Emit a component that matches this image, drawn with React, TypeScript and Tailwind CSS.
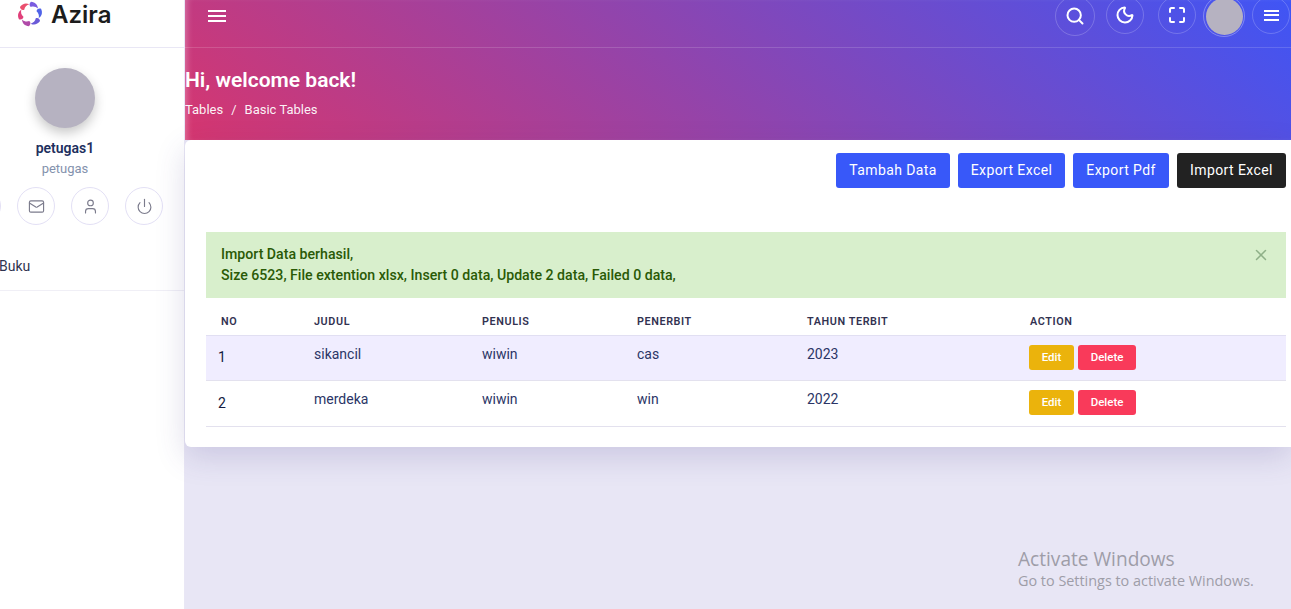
import { Search, Moon, Mail, User, Power, X } from "lucide-react";

const ROWS = [
  { no: 1, judul: "sikancil", penulis: "wiwin", penerbit: "cas", tahun: "2023", rowH: "h-[45px]", pad: "pb-0" },
  { no: 2, judul: "merdeka", penulis: "wiwin", penerbit: "win", tahun: "2022", rowH: "h-[46px]", pad: "pb-[1px]" },
];

const PETALS = [
  { r: 0, c: "#7a5ce0" },
  { r: 60, c: "#4f63e8" },
  { r: 120, c: "#6a5ad8" },
  { r: 180, c: "#b04aa8" },
  { r: 240, c: "#e0407a" },
  { r: 300, c: "#ea4f6e" },
];

function Logo() {
  return (
    <svg viewBox="0 0 26 26" className="w-[26px] h-[26px] shrink-0">
      {PETALS.map((p) => (
        <path
          key={p.r}
          d="M14 .8C18.200 1.200 20.800 3.800 21 7.600 19 5.600 16.400 5 13.800 5.900 12 4.600 12.200 2.400 14 .8z"
          fill={p.c}
          transform={`rotate(${p.r} 13 13)`}
        />
      ))}
    </svg>
  );
}

function TopIcon({ children, className = "w-[38px] h-[38px]" }: { children: React.ReactNode; className?: string }) {
  return (
    <div className={`${className} rounded-full border border-white/20 flex items-center justify-center shrink-0`}>
      {children}
    </div>
  );
}

function SideIcon({ children }: { children?: React.ReactNode }) {
  return (
    <div className="w-[38px] h-[38px] rounded-full border border-[#e3e0f5] flex items-center justify-center shrink-0 text-[#7b7b8c]">
      {children}
    </div>
  );
}

function Hamburger({ className }: { className: string }) {
  return (
    <div className={`flex flex-col justify-between ${className}`}>
      <span className="block h-[2px] bg-white" />
      <span className="block h-[2px] bg-white" />
      <span className="block h-[2px] bg-white" />
    </div>
  );
}

export default function App() {
  return (
    <div className="relative flex w-[1291px] h-[609px] overflow-hidden bg-[#e8e6f5] font-['Roboto',sans-serif] text-[#1d2a55]">
      {/* Sidebar */}
      <aside className="w-[185px] shrink-0 bg-white border-r border-[#e9e7f5] overflow-hidden flex flex-col">
        <div className="h-[48px] shrink-0 border-b border-[#e9e7f5] flex items-start pl-[17px] pt-[1px] gap-[8px]">
          <Logo />
          <span className="font-['Inter',sans-serif] font-semibold text-[24px] leading-[27px] text-[#1c1c1c]">Azira</span>
        </div>
        <div className="flex flex-col items-center pt-[20px] pr-[54px]">
          <div className="w-[60px] h-[60px] rounded-full bg-[#b6b2c1] shadow-[0_5px_12px_rgba(0,0,0,0.22)]" />
          <div className="mt-[10px] text-[14px] leading-[20px] font-semibold text-[#1d2f5e]">petugas1</div>
          <div className="mt-[1px] text-[13px] leading-[20px] text-[#8492ad]">petugas</div>
        </div>
        <div className="mt-[8px] ml-[-37px] flex gap-[16px]">
          <SideIcon />
          <SideIcon><Mail size={17} strokeWidth={1.6} /></SideIcon>
          <SideIcon><User size={17} strokeWidth={1.6} /></SideIcon>
          <SideIcon><Power size={17} strokeWidth={1.6} /></SideIcon>
        </div>
        <div className="mt-[20px] h-[46px] ml-[-1px] border-b border-[#f0eff6] text-[14px] leading-[42px] text-[#2f3350]">Buku</div>
      </aside>

      {/* Main */}
      <main className="flex-1 min-w-0 flex flex-col">
        <div className="h-[140px] shrink-0 bg-[linear-gradient(40deg,#d6366f,#3f55f5)] shadow-[inset_6px_0_6px_-4px_rgba(255,255,255,0.3)]">
          <div className="h-[48px] border-b border-white/15 flex items-start">
            <Hamburger className="ml-[23px] mt-[10px] w-[18px] h-[12px]" />
            <div className="ml-auto flex items-start mt-[-4px]">
              <TopIcon className="w-[40px] h-[40px]"><Search size={20} strokeWidth={2.4} className="text-white" /></TopIcon>
              <div className="ml-[11px]">
                <TopIcon><Moon size={20} strokeWidth={2.4} className="text-white" /></TopIcon>
              </div>
              <div className="ml-[14px]">
                <TopIcon>
                  <svg viewBox="0 0 16 16" className="w-[16px] h-[16px]" fill="none" stroke="white" strokeWidth="2" strokeLinecap="round">
                    <path d="M1 5V2.500A1.500 1.500 0 0 1 2.500 1H5M11 1h2.500A1.500 1.500 0 0 1 15 2.500V5M15 11v2.500a1.500 1.500 0 0 1-1.500 1.500H11M5 15H2.500A1.500 1.500 0 0 1 1 13.500V11" />
                  </svg>
                </TopIcon>
              </div>
              <div className="ml-[7px] mt-[-1px] w-[42px] h-[42px] rounded-full border border-white/30 flex items-center justify-center shrink-0">
                <div className="w-[37px] h-[37px] rounded-full bg-[#b6b2c1]" />
              </div>
              <div className="ml-[7px] mr-[1px]">
                <TopIcon><Hamburger className="w-[15px] h-[11px]" /></TopIcon>
              </div>
            </div>
          </div>
          <h1 className="mt-[19px] text-[21px] leading-[26px] font-semibold text-white">Hi, welcome back!</h1>
          <div className="mt-[8px] text-[13px] leading-[18px] text-white/95 flex gap-[8px]">
            <span>Tables</span>
            <span>/</span>
            <span>Basic Tables</span>
          </div>
        </div>

        {/* Card */}
        <section className="h-[307px] bg-white rounded-tl-[6px] rounded-bl-[6px] shadow-[0_10px_30px_rgba(70,60,140,0.18)] pl-[21px] pr-[5px] pt-[13px]">
          <div className="flex justify-end gap-[8px]">
            <button className="h-[35px] w-[114px] rounded-[3px] bg-[#3858f9] text-white text-[14px] tracking-[0.4px]">Tambah Data</button>
            <button className="h-[35px] w-[107px] rounded-[3px] bg-[#3858f9] text-white text-[14px] tracking-[0.4px]">Export Excel</button>
            <button className="h-[35px] w-[96px] rounded-[3px] bg-[#3858f9] text-white text-[14px] tracking-[0.4px]">Export Pdf</button>
            <button className="h-[35px] w-[109px] rounded-[3px] bg-[#222222] text-white text-[14px] tracking-[0.4px]">Import Excel</button>
          </div>

          <div className="mt-[44px] h-[66px] bg-[#d8efcc] pl-[15px] pr-[16px] py-[12px] flex justify-between text-[14.15px] leading-[21px] font-medium text-[#2a5a06]">
            <div>
              <div>Import Data berhasil,</div>
              <div>Size 6523, File extention xlsx, Insert 0 data, Update 2 data, Failed 0 data,</div>
            </div>
            <X size={18} strokeWidth={2} className="text-[#8fb088] mt-[2px]" />
          </div>

          <table className="w-full table-fixed border-collapse">
            <colgroup>
              <col className="w-[108px]" />
              <col className="w-[168px]" />
              <col className="w-[155px]" />
              <col className="w-[170px]" />
              <col className="w-[223px]" />
              <col />
            </colgroup>
            <thead>
              <tr className="h-[37px] border-b border-[#e1dff2] text-left text-[10.8px] tracking-[0.6px] text-[#323251]">
                <th className="pl-[15px] pt-[12px] font-semibold">NO</th>
                <th className="pt-[12px] font-semibold">JUDUL</th>
                <th className="pt-[12px] font-semibold">PENULIS</th>
                <th className="pt-[12px] font-semibold">PENERBIT</th>
                <th className="pt-[12px] font-semibold">TAHUN TERBIT</th>
                <th className="pt-[12px] font-semibold">ACTION</th>
              </tr>
            </thead>
            <tbody className="text-[14px] text-[#2b3566]">
              {ROWS.map((row, i) => (
                <tr key={row.no} className={`${row.rowH} border-b border-[#e3e1ee] ${i === 0 ? "bg-[#f0edff]" : "bg-white"}`}>
                  <td className="pl-[12px] text-[14px] text-[#141c3f]">{row.no}</td>
                  <td className="pb-[7px]">{row.judul}</td>
                  <td className="pb-[7px]">{row.penulis}</td>
                  <td className="pb-[7px]">{row.penerbit}</td>
                  <td className="pb-[7px]">{row.tahun}</td>
                  <td className={row.pad}>
                    <div className="flex gap-[4px] ml-[-1px]">
                      <button className="h-[25px] w-[45px] rounded-[3px] bg-[#ebb30c] text-white text-[11.5px] font-medium">Edit</button>
                      <button className="h-[25px] w-[58px] rounded-[3px] bg-[#f93a5a] text-white text-[11.5px] font-medium">Delete</button>
                    </div>
                  </td>
                </tr>
              ))}
            </tbody>
          </table>
        </section>
      </main>

      {/* Windows watermark */}
      <div className="absolute left-[1018px] top-[546px] text-[#9e9da8] font-['Open_Sans',sans-serif] pointer-events-none">
        <div className="text-[19.1px] leading-[26px]">Activate Windows</div>
        <div className="text-[14.4px] leading-[18px]">Go to Settings to activate Windows.</div>
      </div>
    </div>
  );
}
